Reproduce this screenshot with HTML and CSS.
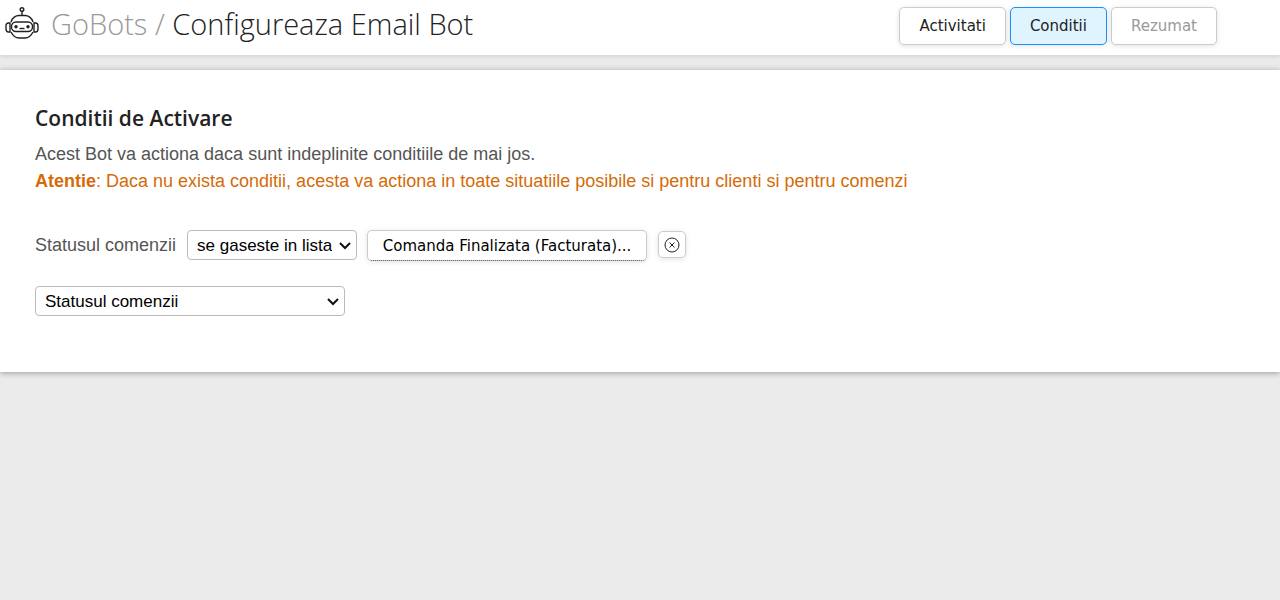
FILE: index.html
```html
<!DOCTYPE html>
<html lang="ro">
<head>
<meta charset="utf-8">
<meta name="viewport" content="width=device-width, initial-scale=1">
<title>GoBots / Configureaza Email Bot</title>
<link rel="stylesheet" href="styles.css">
</head>
<body>
<header class="topbar">
  <svg class="bot" viewBox="0 0 36 36" aria-hidden="true">
    <circle cx="18" cy="5.500" r="1.800"/>
    <path d="M18 7.500V11"/>
    <path d="M7 18C8 13.500 12 11.500 15 11.500h6c3 0 7 2 8 6.500M7 28c2 4 5 6 8 6h6c3 0 6-2 8-6"/>
    <path d="M6 19H4.500q-2.500 0-2.500 3v3q0 3 2.500 3H6zM30 19h1.500q2.500 0 2.500 3v3q0 3-2.500 3H30z"/>
    <rect x="7.500" y="18" width="21" height="9.500" rx="4.500"/>
    <path d="M15.500 24.500h5"/>
    <circle class="eye" cx="12" cy="22.800" r="1.700"/>
    <circle class="eye" cx="24" cy="22.800" r="1.700"/>
  </svg>
  <h1 class="title"><a class="crumb" href="#">GoBots /</a> Configureaza Email Bot</h1>
  <nav class="steps">
    <button class="btn" type="button">Activitati</button>
    <button class="btn active" type="button">Conditii</button>
    <button class="btn" type="button" disabled>Rezumat</button>
  </nav>
</header>
<main class="panel">
  <h2 class="heading">Conditii de Activare</h2>
  <p class="text">Acest Bot va actiona daca sunt indeplinite conditiile de mai jos.</p>
  <p class="text warning"><strong>Atentie</strong>: Daca nu exista conditii, acesta va actiona in toate situatiile posibile si pentru clienti si pentru comenzi</p>
  <div class="condition">
    <label class="label" for="operator">Statusul comenzii</label>
    <span class="field operator">
      <select class="select" id="operator"><option>se gaseste in lista</option></select>
      <svg class="chevron" viewBox="0 0 12 8" aria-hidden="true"><path d="M1 1l5 5 5-5"/></svg>
    </span>
    <button class="value" type="button">Comanda Finalizata (Facturata)...</button>
    <button class="remove" type="button" aria-label="Sterge conditia">
      <svg class="cross" viewBox="0 0 16 16" aria-hidden="true"><circle cx="8" cy="8" r="7"/><path d="M5.500 5.500l5 5M10.500 5.500l-5 5"/></svg>
    </button>
  </div>
  <span class="field criterion">
    <select class="select" aria-label="Adauga conditie"><option>Statusul comenzii</option></select>
    <svg class="chevron" viewBox="0 0 12 8" aria-hidden="true"><path d="M1 1l5 5 5-5"/></svg>
  </span>
</main>
</body>
</html>
```
FILE: styles.css
```css
* { box-sizing: border-box; }
body {
  min-height: 100vh;
  margin: 0;
  background: #ebebeb;
  color: #555;
  font-family: "Liberation Sans", Arial, sans-serif;
}
.topbar {
  display: flex;
  align-items: flex-start;
  min-height: 55px;
  padding: 4px 63px 0 4px;
  background: #fff;
  box-shadow: 0 1px 5px rgba(0, 0, 0, .12);
}
.bot {
  width: 36px;
  height: 36px;
  fill: none;
  stroke: #222;
  stroke-width: 1.4;
}
.bot .eye { fill: #222; stroke: none; }
.title {
  margin: 0 0 0 11px;
  color: #222;
  font: 300 29px/40px "Open Sans", sans-serif;
}
.crumb { color: #999; text-decoration: none; }
.steps {
  display: flex;
  gap: 4px;
  margin: 3px 0 0 auto;
}
.btn {
  height: 38px;
  padding: 0 19px;
  border: 1px solid #ccc;
  border-radius: 5px;
  background: #fff;
  box-shadow: 0 1px 5px rgba(0, 0, 0, .12);
  color: #222;
  font: 15px "DejaVu Sans", sans-serif;
}
.btn.active { border-color: #1890ff; background: #e0f4ff; }
.btn:disabled { color: #999; }
.panel {
  margin-top: 15px;
  padding: 33px 35px 56px;
  background: #fff;
  box-shadow: 0 1px 6px rgba(0, 0, 0, .35);
}
.heading {
  margin: 0 0 8px;
  color: #222;
  font: 600 21px/30px "Open Sans", sans-serif;
}
.text {
  margin: 0;
  font-size: 18px;
  line-height: 27px;
}
.warning { color: #d46b08; }
.condition {
  display: flex;
  align-items: flex-start;
  margin: 35px 0 25px;
}
.label {
  margin-right: 11px;
  font-size: 18px;
  line-height: 30px;
}
.field {
  display: block;
  position: relative;
  max-width: 100%;
}
.operator { width: 170px; margin-right: 10px; }
.criterion { width: 310px; }
.select {
  display: block;
  width: 100%;
  height: 30px;
  padding: 0 24px 0 9px;
  border: 1px solid #bbb;
  border-radius: 4px;
  background: #fff;
  color: #000;
  font: 17px "Liberation Sans", Arial, sans-serif;
  appearance: none;
}
.chevron {
  position: absolute;
  top: 12px;
  right: 6px;
  width: 12px;
  height: 8px;
  fill: none;
  stroke: #111;
  stroke-width: 2;
  pointer-events: none;
}
.value {
  min-width: 280px;
  height: 31px;
  margin-right: 11px;
  padding: 0 12px;
  border: 1px solid #ccc;
  border-bottom: 1px dotted #333;
  border-radius: 5px;
  background: #fff;
  box-shadow: 0 1px 5px rgba(0, 0, 0, .12);
  color: #000;
  font: 15px "DejaVu Sans", sans-serif;
}
.remove {
  display: grid;
  place-items: center;
  width: 28px;
  height: 27px;
  margin-top: 1px;
  padding: 0;
  border: 1px solid #ccc;
  border-radius: 5px;
  background: #fff;
  box-shadow: 0 1px 5px rgba(0, 0, 0, .12);
}
.cross {
  width: 16px;
  height: 16px;
  fill: none;
  stroke: #222;
}
```
